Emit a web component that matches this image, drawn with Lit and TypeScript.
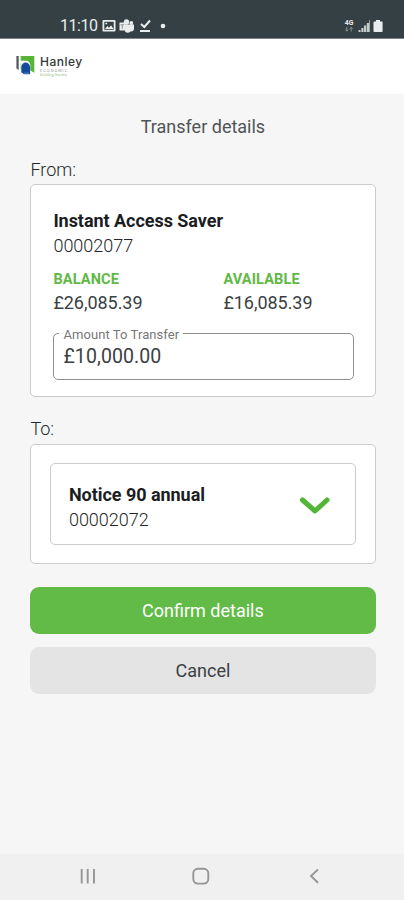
import { LitElement, html, css } from "lit";
import { customElement } from "lit/decorators.js";

@customElement("status-bar")
class StatusBar extends LitElement {
  static styles = css`
    :host { display: flex; justify-content: space-between; height: 39px; box-sizing: border-box;
      padding: 12px 20px 0 60px; background: #344043; border-bottom: 1px solid #7d8585; color: #e9eded; }
    .side { display: flex; align-items: center; height: 27px; }
    .time { font-size: 16px; line-height: 27px; letter-spacing: -0.450px; width: 42px; }
    svg { display: block; }
  `;
  render() {
    return html`
      <div class="side">
        <span class="time">11:10</span>
        <svg width="66" height="16" viewBox="0 0 66 16" fill="#e9eded">
          <path fill-rule="evenodd" d="M1.500 2h11a1 1 0 0 1 1 1v9.500a1 1 0 0 1-1 1h-11a1 1 0 0 1-1-1V3a1 1 0 0 1 1-1zM2.300 3.800v8h9.400v-8zM3 11l2.400-3 1.600 1.700L9 7.200l2.500 3.800zM3.400 4.700h1.800v1.600H3.400z"/>
          <circle cx="24.500" cy="4" r="2.700"/><circle cx="29.300" cy="5" r="1.900"/>
          <path d="M17.500 4.500H23v8h-5.500zM23 6.500h9v4a3 3 0 0 1-3 3h-.5a4 4 0 0 1-5.500 0z"/>
          <path d="M18.500 6.800h3.600M20.300 6.800v4" stroke="#8d9695" stroke-width="1" fill="none"/>
          <path d="M39 6l3.300 3L48 2.500" fill="none" stroke="#e9eded" stroke-width="2"/>
          <path d="M38 12h10v2H38z"/><circle cx="61" cy="8" r="2.300"/>
        </svg>
      </div>
      <div class="side">
        <svg width="40" height="16" viewBox="0 0 40 16" fill="#e9eded">
          <text x="0.800" y="7.200" font-size="7.500" font-weight="700" font-family="Roboto, sans-serif" textLength="8.500" lengthAdjust="spacingAndGlyphs">4G</text>
          <path d="M2.800 9v4M1.300 11.500l1.500 1.700 1.500-1.700M7.200 13.500v-4M5.700 11l1.500-1.700L8.700 11" fill="none" stroke="#8e9897" stroke-width=".9"/>
          <path d="M14.500 12h2v2h-2zM17.300 10h2.200v4h-2.200zM20 7.500h2.200V14H20zM22.800 5H25v9h-2.200z" opacity=".8"/>
          <path d="M25 2.300h1V14h-1z" opacity=".6"/>
          <path d="M32 2h4v1.500h1.800a.8.8 0 0 1 .8.8v9a.8.8 0 0 1-.8.800h-7.500a.8.8 0 0 1-.8-.8v-9a.8.8 0 0 1 .8-.8H32z"/>
        </svg>
      </div>`;
  }
}

@customElement("brand-header")
class BrandHeader extends LitElement {
  static styles = css`
    :host { display: flex; gap: 5px; height: 55px; padding: 17px 0 0 16px; box-sizing: border-box; background: #fff; }
    .mark { display: block; }
    .words { display: flex; flex-direction: column; color: #343739; }
    .name { font: 500 12px/11px Inter, sans-serif; letter-spacing: 0.500px; height: 12px; }
    .sub { font: 3.800px/5px Inter, sans-serif; letter-spacing: 0.900px; color: #8d9291; }
    .tag { font: 3.600px/5px Inter, sans-serif; letter-spacing: 0; color: #9dbd8e; }
  `;
  render() {
    return html`
      <svg class="mark" width="19" height="20" viewBox="0 0 19 20">
        <path d="M.4 0h2.300v14L.4 12.500z" fill="#555b5d"/>
        <path d="M4.700 0h13.600v16.800l-4-2.300V9.200A4.300 4.300 0 0 0 10 4.700H4.700z" fill="#58b435"/>
        <path d="M5 7.500v6" stroke="#91c57b" stroke-width=".8"/>
        <path d="M5.300 16.200V11a4.300 4.300 0 0 1 8.800 0v7.200H8z" fill="#164b9c"/>
        <path d="M8 17.200h5" stroke="#5584c2" stroke-width="1"/>
      </svg>
      <div class="words">
        <span class="name">Hanley</span><span class="sub">ECONOMIC</span><span class="tag">Building Society</span>
      </div>`;
  }
}

@customElement("nav-bar")
class NavBar extends LitElement {
  static styles = css`
    :host { display: flex; height: 46px; background: #f0f0f0; }
    svg { display: block; }
  `;
  render() {
    return html`<svg width="404" height="46" fill="none" stroke="#959595" stroke-width="1.900">
      <path d="M81.700 15v14.500M87.700 15v14.500M94 15v14.500"/>
      <rect x="193.300" y="14.800" width="15" height="14.800" rx="4.500"/>
      <path d="M318 15.500L311 22l7 6.800"/>
    </svg>`;
  }
}

@customElement("app-root")
class AppRoot extends LitElement {
  static styles = css`
    :host { display: flex; flex-direction: column; height: 900px; box-sizing: border-box; background: #f6f6f6;
      font-family: Roboto, sans-serif; font-size: 18px; line-height: 24px; color: #3b4043; }
    main { flex: 1; display: flex; flex-direction: column; padding: 21px 28.500px 0 30.400px; }
    h1 { margin: 0; font-size: 18px; font-weight: 400; text-align: center; line-height: 24px; color: #505457; }
    .caption { margin-top: 19px; height: 26px; font-weight: 300; color: #232729; }
    .caption.to { margin-top: 20px; height: 27px; }
    .card { box-sizing: border-box; background: #fff; border: 1px solid #cbcbcb; border-radius: 5px; }
    .from { height: 213px; padding: 23px 21px 0 22px; }
    .target { height: 120px; padding: 18px 19px 0; }
    .name { font-weight: 700; color: #1b1d1f; font-size: 18px; letter-spacing: -0.040px; }
    .from .name { line-height: 25px; }
    .number { line-height: 26px; font-weight: 300; color: #232729; }
    .sums { display: grid; grid-template-columns: 170px 1fr; margin-top: 10px; }
    .key { font-size: 14.500px; font-weight: 700; color: #5fb944; line-height: 22px; letter-spacing: 0.150px; }
    .sum { line-height: 24px; letter-spacing: -0.050px; }
    fieldset { box-sizing: border-box; height: 56px; margin: 9px 0 0; padding: 0 0 0 9px; border: 1px solid #8f8f8f; border-radius: 5px; min-width: 0; }
    legend { margin-left: -4px; padding: 3px 4px 0; font-size: 13px; line-height: 16px; color: #777; letter-spacing: 0.080px; }
    .value { font-size: 19.500px; line-height: 28px; letter-spacing: 0.100px; }
    .select { display: flex; justify-content: space-between; align-items: flex-start; box-sizing: border-box; height: 82px;
      border: 1px solid #cbcbcb; border-radius: 5px; padding: 19px 24px 0 17.500px; }
    .chevron { display: block; margin-top: 13px; }
    .button { display: block; width: 100%; height: 47px; border: 0; border-radius: 9px; font: 18px/48px Roboto, sans-serif; padding: 0; }
    .primary { margin-top: 23px; background: #61bb46; color: #fff; }
    .secondary { margin-top: 13px; background: #e4e4e4; color: #3b4043; }
  `;
  render() {
    return html`
      <status-bar></status-bar>
      <brand-header></brand-header>
      <main>
        <h1>Transfer details</h1>
        <div class="caption">From:</div>
        <section class="card from">
          <div class="name">Instant Access Saver</div>
          <div class="number">00002077</div>
          <div class="sums">
            <div><div class="key">BALANCE</div><div class="sum">£26,085.39</div></div>
            <div><div class="key">AVAILABLE</div><div class="sum">£16,085.39</div></div>
          </div>
          <fieldset>
            <legend>Amount To Transfer</legend>
            <div class="value">£10,000.00</div>
          </fieldset>
        </section>
        <div class="caption to">To:</div>
        <section class="card target">
          <div class="select">
            <div><div class="name">Notice 90 annual</div><div class="number">00002072</div></div>
            <svg class="chevron" width="31" height="20"><path d="M2.500 4L15 15L27 4" fill="none" stroke="#54b636" stroke-width="5" stroke-linecap="round" stroke-linejoin="round"/></svg>
          </div>
        </section>
        <button class="button primary">Confirm details</button>
        <button class="button secondary">Cancel</button>
      </main>
      <nav-bar></nav-bar>`;
  }
}
